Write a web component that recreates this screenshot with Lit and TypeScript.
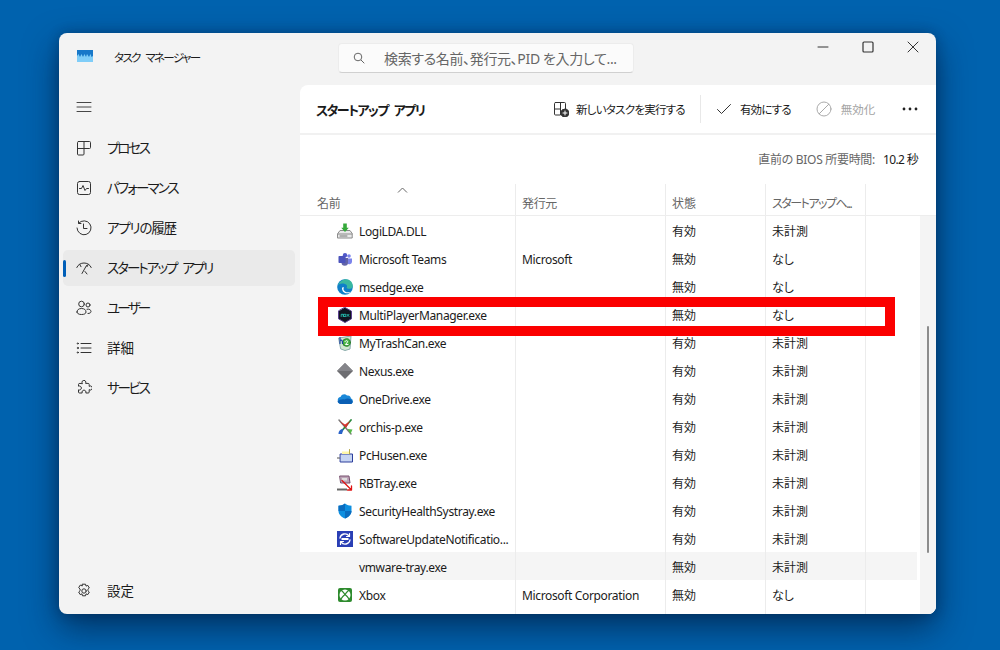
import { LitElement, html, css, svg } from "lit";
import { customElement } from "lit/decorators.js";

const S = (body: unknown, size = 16, vb = "0 0 16 16") => html`<svg width=${size} height=${size} viewBox=${vb} fill="none" stroke="#333" stroke-width="1" stroke-linecap="round" stroke-linejoin="round">${body}</svg>`;

const navIcons: Record<string, unknown> = {
  proc: S(svg`<path d="M2.5 1.500h11a1 1 0 0 1 1 1v5a1 1 0 0 1-1 1H8V14a1 1 0 0 1-1 1H2.500a1 1 0 0 1-1-1V2.500a1 1 0 0 1 1-1zM1.500 8.500H8M8 1.500v7"/>`),
  perf: S(svg`<rect x="1.500" y="1.500" width="13" height="13" rx="2"/><path d="M3.500 8.500h2l1.500-3 2 5 1.500-2h2"/>`),
  hist: S(svg`<path d="M2.700 3.200A7 7 0 1 1 1 8M2.500 1v2.500H5M7.500 4v4.500h3.500"/>`),
  start: S(svg`<path d="M.8 7.500C2 4.500 5 3 8 3c3 0 6 1.500 7.200 4.500M6 13.500l4.500-8M9 11.500l2 2.500M3.800 4.500l1.200 2.200M12.200 4.500l-1.200 2.200"/>`),
  user: S(svg`<circle cx="5.500" cy="4" r="2.800"/><path d="M1 12c0-2 1.500-3.500 4.500-3.500S10 10 10 12c0 1.500-1.500 2.500-4.500 2.500S1 13.500 1 12z"/><circle cx="12" cy="5" r="2"/><path d="M11 9.200c2.500-.5 4 .8 4 2.300 0 1.200-1.200 2-3 2"/>`),
  list: S(svg`<path d="M5 3.500h10M5 8h10M5 12.500h10"/><circle cx="1.800" cy="3.500" r=".6"/><circle cx="1.800" cy="8" r=".6"/><circle cx="1.800" cy="12.500" r=".6"/>`),
  svc: S(svg`<path d="M6.200 3.400a2 2 0 1 1 3.400 0h2.600a1 1 0 0 1 1 1v2a2 2 0 1 1 0 3.200v2.400a1 1 0 0 1-1 1H9.800a2 2 0 1 0-3.600 0H3.500a1 1 0 0 1-1-1V9.800a2 2 0 1 0 0-3.600V4.400a1 1 0 0 1 1-1z"/>`),
  gear: S(svg`<circle cx="8" cy="8" r="2.200"/><path d="M6.500 1.200h3l.5 1.900 1.800-.7 1.500 2.600-1.400 1.300v1.400l1.400 1.300-1.500 2.600-1.800-.7-.5 1.900h-3l-.5-1.900-1.800.7-1.500-2.600 1.400-1.300V6L2.700 4.700l1.500-2.600 1.800.7z"/>`),
};

const appIcons: Record<string, unknown> = {
  logi: S(svg`<path d="M.8 10.500L3 7.500h10l2.200 3v4.500H.8z" fill="#e9e9e9" stroke="#8a8a8a"/><path d="M1 11h14" stroke="#8a8a8a"/><path d="M4.200 4.800L8 9l3.800-4.200H9.800V.5H6.200v4.300z" fill="#35a93a" stroke="none"/><path d="M3 13h7" stroke="#777"/>`),
  teams: S(svg`<circle cx="12" cy="5" r="1.800" fill="#7b83eb" stroke="none"/><path d="M9 7.500h6v3.500a2.700 2.700 0 0 1-5 1z" fill="#7b83eb" stroke="none"/><circle cx="8" cy="4.300" r="2.200" fill="#5059c9" stroke="none"/><path d="M4.500 7h6.500v4.500a3.200 3.200 0 0 1-6.500 0z" fill="#6264a7" stroke="none"/><rect x="1.500" y="5" width="7" height="7" rx=".8" fill="#4b53bc" stroke="none"/>`),
  edge: S(svg`<circle cx="8" cy="8" r="7.800" fill="#0f7fc9" stroke="none"/><path d="M.6 7C2 2.500 6 .2 9 .2c4 0 6.800 3 6.800 6.800 0 2-1.800 2.800-3.500 2.800-1.500 0-2.500-.5-2.800-1 1-1 .8-3-1.500-3.800C5 4 2 4.500.6 7z" fill="#39b8a0" stroke="none"/><path d="M5 9.200c0 3 2.300 5 5 5 1.500 0 3-.5 4-1.500-2 1-4.500.8-6-.3C6.500 11.500 6 10 7 8.500 5.800 8 5 8.300 5 9.200z" fill="#fff" stroke="none"/>`),
  mpm: S(svg`<path d="M8 .5l6.500 3.700v7.600L8 15.500l-6.500-3.700V4.200z" fill="#101520" stroke="#5b3f8f"/><path d="M4.200 9.500V7.300h2v2.200M7 7.300h1.800v2.200H7zM10 7.300l2 2.200M12 7.300l-2 2.200" stroke="#27d6c4" stroke-width=".8"/>`),
  trash: S(svg`<path d="M2 3l12-2-1 13-5 1.500-4-1.500z" fill="#cfe8d0" stroke="#8aa"/><circle cx="9.500" cy="7.500" r="3.800" fill="#49b648" stroke="#2b7e2b"/><path d="M3 2.500v6M3 5.500c2-1 2.500 0 2.500 3" stroke="#1c3fa0" stroke-width="1.200"/><path d="M8 6.500c1-1.500 3-1 2.500.5L8.500 9.500H11" stroke="#fff"/>`),
  nexus: S(svg`<path d="M8 0l8 8-8 8-8-8z" fill="#6e6e72" stroke="none"/><path d="M8 0l8 8H0z" fill="#85858a" stroke="none"/>`),
  onedrive: S(svg`<path d="M4 13a3.700 3.700 0 0 1-.3-7.300C5 3 8 2.500 10 4.500c2.500-.5 3.800 1 4 3 1.500.5 2 2 1.800 3.200-.3 1.500-1.300 2.300-2.800 2.300z" fill="#1b88d8" stroke="none"/><path d="M4 13h9c1.500 0 2.500-.8 2.800-2.300C13.500 7 10 7 7.500 8.500 5 8 2 9 .5 10.500 1 12 2.500 13 4 13z" fill="#0a5fb4" stroke="none"/>`),
  orchis: S(svg`<path d="M2 1l12 14" stroke="#7a7a7a" stroke-width="1.500"/><path d="M14 1L3 14" stroke="#2b8a3e" stroke-width="1.800"/><path d="M2.500 2l5.500 3.500L13 2l-4 7z" fill="#d8332f" stroke="none"/><path d="M1.500 15c0-3.500 2-5 5-5l-1.500 5z" fill="#2a62c9" stroke="none"/><path d="M10.500 10l5 .5-2 4.500z" fill="#56b948" stroke="none"/>`),
  pchusen: S(svg`<path d="M3.500 7h12v8h-12z" fill="#c6d4f2" stroke="#2d3f9c"/><path d="M5 7V4.500h7L13 7z" fill="#fff7a8" stroke="none"/><path d="M0 11h2.500" stroke="#555" stroke-width="1.200"/><path d="M12.500 2.500V7" stroke="#b8a94a"/>`),
  rbtray: S(svg`<path d="M3 1h9l1 7H4z" fill="#bda3b7" stroke="#77506e"/><path d="M5 3h5v2.500H5z" fill="#ddd" stroke="none"/><path d="M0 13.500h10V15.500H0z" fill="#666" stroke="none"/><path d="M5 5.500l9.500 9.500M14.500 15v-4M14.500 15h-4" stroke="#e01414" stroke-width="1.300"/>`),
  shield: S(svg`<path d="M8 .5c2 1.500 4 2.200 6.500 2.300V8c0 3.500-3 6.200-6.500 7.500C4.500 14.200 1.500 11.500 1.500 8V2.800C4 2.700 6 2 8 .5z" fill="#0e8fe0" stroke="none"/><path d="M8 .5c-2 1.500-4 2.200-6.500 2.300V8H8zM14.500 8H8v7.500c3.500-1.300 6.500-4 6.500-7.500z" fill="#0a6cbf" stroke="none"/>`),
  swu: S(svg`<rect width="16" height="16" fill="#2a3fb5" stroke="none"/><path d="M3 7a5 5 0 0 1 9-2M13 9a5 5 0 0 1-9 2" stroke="#fff" stroke-width="1.300"/><path d="M12.500 2.500V5.500H9.500M3.500 13.500v-3h3" stroke="#fff" stroke-width="1.200"/><rect x="4.500" y="7" width="7" height="2" fill="#fff" stroke="none"/>`),
  xbox: S(svg`<rect x="1" y="1" width="14" height="14" rx="2" fill="#2e8b2e" stroke="none"/><circle cx="8" cy="8" r="5.500" fill="#fff" stroke="none"/><path d="M4.500 3.500C6 4.800 7 6 8 7.500 9 6 10 4.800 11.500 3.500M3.800 12.300C4.800 10.300 6 9 8 7.500c2 1.500 3.200 2.800 4.200 4.800" stroke="#2e8b2e" stroke-width="1.300"/>`),
};

const navItems: [string, string, number][] = [
  ["proc", "プロセス", -2.25], ["perf", "パフォーマンス", -1.85], ["hist", "アプリの履歴", -1.2],
  ["start", "スタートアップ アプリ", -1.95], ["user", "ユーザー", -2.75], ["list", "詳細", 0], ["svc", "サービス", -2.25],
];

const rows = [
  ["logi", "LogiLDA.DLL", "", "有効", "未計測"],
  ["teams", "Microsoft Teams", "Microsoft", "無効", "なし"],
  ["edge", "msedge.exe", "", "無効", "なし"],
  ["mpm", "MultiPlayerManager.exe", "", "無効", "なし"],
  ["trash", "MyTrashCan.exe", "", "有効", "未計測"],
  ["nexus", "Nexus.exe", "", "有効", "未計測"],
  ["onedrive", "OneDrive.exe", "", "有効", "未計測"],
  ["orchis", "orchis-p.exe", "", "有効", "未計測"],
  ["pchusen", "PcHusen.exe", "", "有効", "未計測"],
  ["rbtray", "RBTray.exe", "", "有効", "未計測"],
  ["shield", "SecurityHealthSystray.exe", "", "有効", "未計測"],
  ["swu", "SoftwareUpdateNotificatio...", "", "有効", "未計測"],
  ["none", "vmware-tray.exe", "", "無効", "未計測"],
  ["xbox", "Xbox", "Microsoft Corporation", "無効", "なし"],
];

@customElement("app-root")
export class AppRoot extends LitElement {
  static styles = css`
    :host {
      display: block; width: 1000px; height: 650px; box-sizing: border-box;
      padding: 33px 64px 36px 59px; overflow: hidden;
      background: #0062ae;
      font-family: "Noto Sans", "Noto Sans CJK JP", sans-serif; font-size: 12px; color: #1b1b1b;
      font-feature-settings: "palt";
    }
    .win {
      width: 877px; height: 581px; position: relative; background: #f3f3f3; border-radius: 8px; overflow: hidden;
      display: flex; flex-direction: column;
      box-shadow: 0 14px 34px rgba(0, 20, 50, .6), 0 0 12px rgba(0, 20, 50, .3);
    }
    .title { height: 52px; flex: none; display: flex; align-items: flex-start; }
    .appicon { margin: 15px 0 0 18px; width: 16px; height: 16px; flex: none; }
    .apptitle { margin: 16px 0 0 21px; width: 224px; line-height: 18px; flex: none; white-space: nowrap; font-size: 11.500px; letter-spacing: -1.6px; word-spacing: 4px; }
    .search {
      margin: 10px 0 0 0; width: 296px; height: 30px; box-sizing: border-box; flex: none;
      background: #fbfbfb; border: 1px solid #ececec; border-bottom-color: #d0d0d0; border-radius: 4px;
      display: flex; align-items: center; padding-left: 14px; color: #666; font-size: 14px;
    }
    .search svg { flex: none; }
    .search span { margin-left: 19px; white-space: nowrap; letter-spacing: -.35px; }
    .controls { margin-left: auto; display: flex; padding: 6px 15px 0 0; gap: 29px; }
    .body { flex: 1; display: flex; min-height: 0; }
    .side { width: 241px; flex: none; display: flex; flex-direction: column; padding: 0 5px 0 4px; box-sizing: border-box; }
    .burger { height: 16px; margin: 14px 0 15px 13px; }
    .nav { height: 36px; margin-bottom: 4px; display: flex; align-items: center; border-radius: 5px; position: relative; padding-left: 13px; font-size: 13.500px; }
    .nav.sel { background: #eaeaea; }
    .nav.sel::before { content: ""; position: absolute; left: 0; top: 10px; width: 3px; height: 17px; background: #005fb8; border-radius: 2px; }
    .nav svg { flex: none; }
    .nav span { margin: -2px 0 0 15px; white-space: nowrap; word-spacing: 4px; }
    .spacer { flex: 1; }
    .settings { margin-bottom: 5px; }
    .main { flex: 1; min-width: 0; background: #fff; border-top-left-radius: 8px; display: flex; flex-direction: column; }
    .bar { height: 50px; flex: none; display: flex; align-items: center; border-bottom: 2px solid #f1f1f1; box-sizing: border-box; padding-left: 16px; }
    .h { font-size: 13px; font-weight: 600; letter-spacing: -1.55px; word-spacing: 4px; width: 237px; flex: none; white-space: nowrap; }
    .act { display: flex; align-items: center; white-space: nowrap; font-size: 11.500px; letter-spacing: -.75px; }
    .act span { margin-left: 7px; }
    .div { width: 1px; height: 28px; background: #e8e8e8; margin: 0 15px 0 15px; flex: none; }
    .act .on { margin-left: 8px; letter-spacing: -.8px; }
    .off { color: #a3a3a3; margin-left: 25px; }
    .off span { margin-left: 9px; letter-spacing: 0; }
    .dots { margin-left: 27px; height: 16px; }
    .bios { height: 49px; flex: none; display: flex; justify-content: flex-end; align-items: center; padding: 0 18px 2px 0; color: #666; gap: 8px; box-sizing: border-box; letter-spacing: -.3px; }
    .bios b { font-weight: 400; color: #1b1b1b; letter-spacing: -.65px; }
    .table { flex: 1; display: flex; flex-direction: column; min-height: 0; position: relative; }
    .head, .row { display: flex; flex: none; }
    .head { height: 32px; border-bottom: 1px solid #ededed; color: #666; box-sizing: border-box; position: relative; white-space: nowrap; }
    .row { height: 28px; width: 617px; align-items: stretch; white-space: nowrap; }
    .row.hov { background: #f5f5f5; }
    .c { border-right: 1px solid #ececec; box-sizing: border-box; display: flex; align-items: center; padding-left: 6px; padding-top: 2px; letter-spacing: -.35px; }
    .c1 { width: 216px; padding-left: 37px; }
    .c2 { width: 150px; }
    .c3 { width: 100px; letter-spacing: 0; }
    .c4 { width: 100px; letter-spacing: 0; }
    .head .c { align-items: flex-end; padding-bottom: 2px; line-height: 18px; }
    .head .c1 { padding-left: 17px; }
    .head .c4 { letter-spacing: -1.5px; }
    .c1 svg, .c1 .blank { width: 16px; height: 16px; flex: none; margin-right: 6px; }
    .fill { flex: 1; width: 617px; }
    .chev { position: absolute; left: 97px; top: 3px; }
    .lane { position: absolute; right: 0; top: 32px; bottom: 0; width: 16px; background: #f4f4f4; display: flex; justify-content: center; }
    .thumb { width: 2px; height: 227px; margin-top: 110px; background: #8c8c8c; border-radius: 1px; }
    .mark { position: absolute; left: 259px; top: 264px; width: 577px; height: 39px; border: 10px solid #fb0000; box-sizing: border-box; }
  `;

  render() {
    return html`<div class="win">
      <div class="title">
        <svg class="appicon" viewBox="0 0 16 16"><rect y="2" width="16" height="12" fill="#7fcdf8"/><path d="M0 2h16v6l-1.500 1-1-3-1.500 3-2-3-1 3-1.500-3-1.500 3-1.500-3L3 9 1.500 6 0 8z" fill="#1778c9"/></svg>
        <div class="apptitle">タスク マネージャー</div>
        <div class="search">
          <svg width="12" height="12" viewBox="0 0 12 12" fill="none" stroke="#666"><circle cx="5" cy="5" r="3.800"/><path d="M8 8l3.300 3.300"/></svg>
          <span>検索する名前、発行元、PID を入力して...</span>
        </div>
        <div class="controls">
          ${S(svg`<path d="M3 8h10"/>`)}
          ${S(svg`<rect x="3" y="3" width="10" height="10" rx="1" stroke-width="1.200"/>`)}
          ${S(svg`<path d="M3 3l10 10M13 3L3 13"/>`)}
        </div>
      </div>
      <div class="body">
        <div class="side">
          <div class="burger">${S(svg`<path d="M1 3.500h14M1 8h14M1 12.500h14" stroke-width=".9"/>`)}</div>
          ${navItems.map(([k, t, ls]) => html`<div class="nav ${k === "start" ? "sel" : ""}">${navIcons[k]}<span style="letter-spacing:${ls}px">${t}</span></div>`)}
          <div class="spacer"></div>
          <div class="nav settings">${navIcons.gear}<span>設定</span></div>
        </div>
        <div class="main">
          <div class="bar">
            <div class="h">スタートアップ アプリ</div>
            <div class="act">
              ${S(svg`<path d="M2.500 1.500h9a1 1 0 0 1 1 1V8M7.500 1.500V8H1.500M2.500 1.500a1 1 0 0 0-1 1V13a1 1 0 0 0 1 1h5V8"/><circle cx="12" cy="12" r="4" fill="#333"/><path d="M12 10v4M10 12h4" stroke="#fff"/>`)}
              <span>新しいタスクを実行する</span>
            </div>
            <div class="div"></div>
            <div class="act">
              ${S(svg`<path d="M1.500 8.500l4 4 9-9"/>`)}
              <span class="on">有効にする</span>
            </div>
            <div class="act off">
              ${S(svg`<g stroke="#aaa"><circle cx="8" cy="8" r="7"/><path d="M3.200 12.800L12.800 3.200"/></g>`)}
              <span>無効化</span>
            </div>
            <div class="dots">
              <svg width="16" height="16" viewBox="0 0 16 16" fill="#222"><circle cx="2" cy="8" r="1.400"/><circle cx="8" cy="8" r="1.400"/><circle cx="14" cy="8" r="1.400"/></svg>
            </div>
          </div>
          <div class="bios"><span>直前の BIOS 所要時間:</span><b>10.2 秒</b></div>
          <div class="table">
            <div class="head">
              <div class="c c1">名前</div><div class="c c2">発行元</div><div class="c c3">状態</div><div class="c c4">スタートアップヘ...</div>
              <svg class="chev" width="11" height="7" viewBox="0 0 11 7" fill="none" stroke="#666"><path d="M1 5.500l4.500-4.500 4.500 4.500"/></svg>
            </div>
            ${rows.map((r) => html`<div class="row ${r[0] === "none" ? "hov" : ""}">
              <div class="c c1">${r[0] === "none" ? html`<div class="blank"></div>` : appIcons[r[0]]}${r[1]}</div>
              <div class="c c2">${r[2]}</div><div class="c c3">${r[3]}</div><div class="c c4">${r[4]}</div>
            </div>`)}
            <div class="row fill"><div class="c c1"></div><div class="c c2"></div><div class="c c3"></div><div class="c c4"></div></div>
            <div class="lane"><div class="thumb"></div></div>
          </div>
        </div>
      </div>
      <div class="mark"></div>
    </div>`;
  }
}
